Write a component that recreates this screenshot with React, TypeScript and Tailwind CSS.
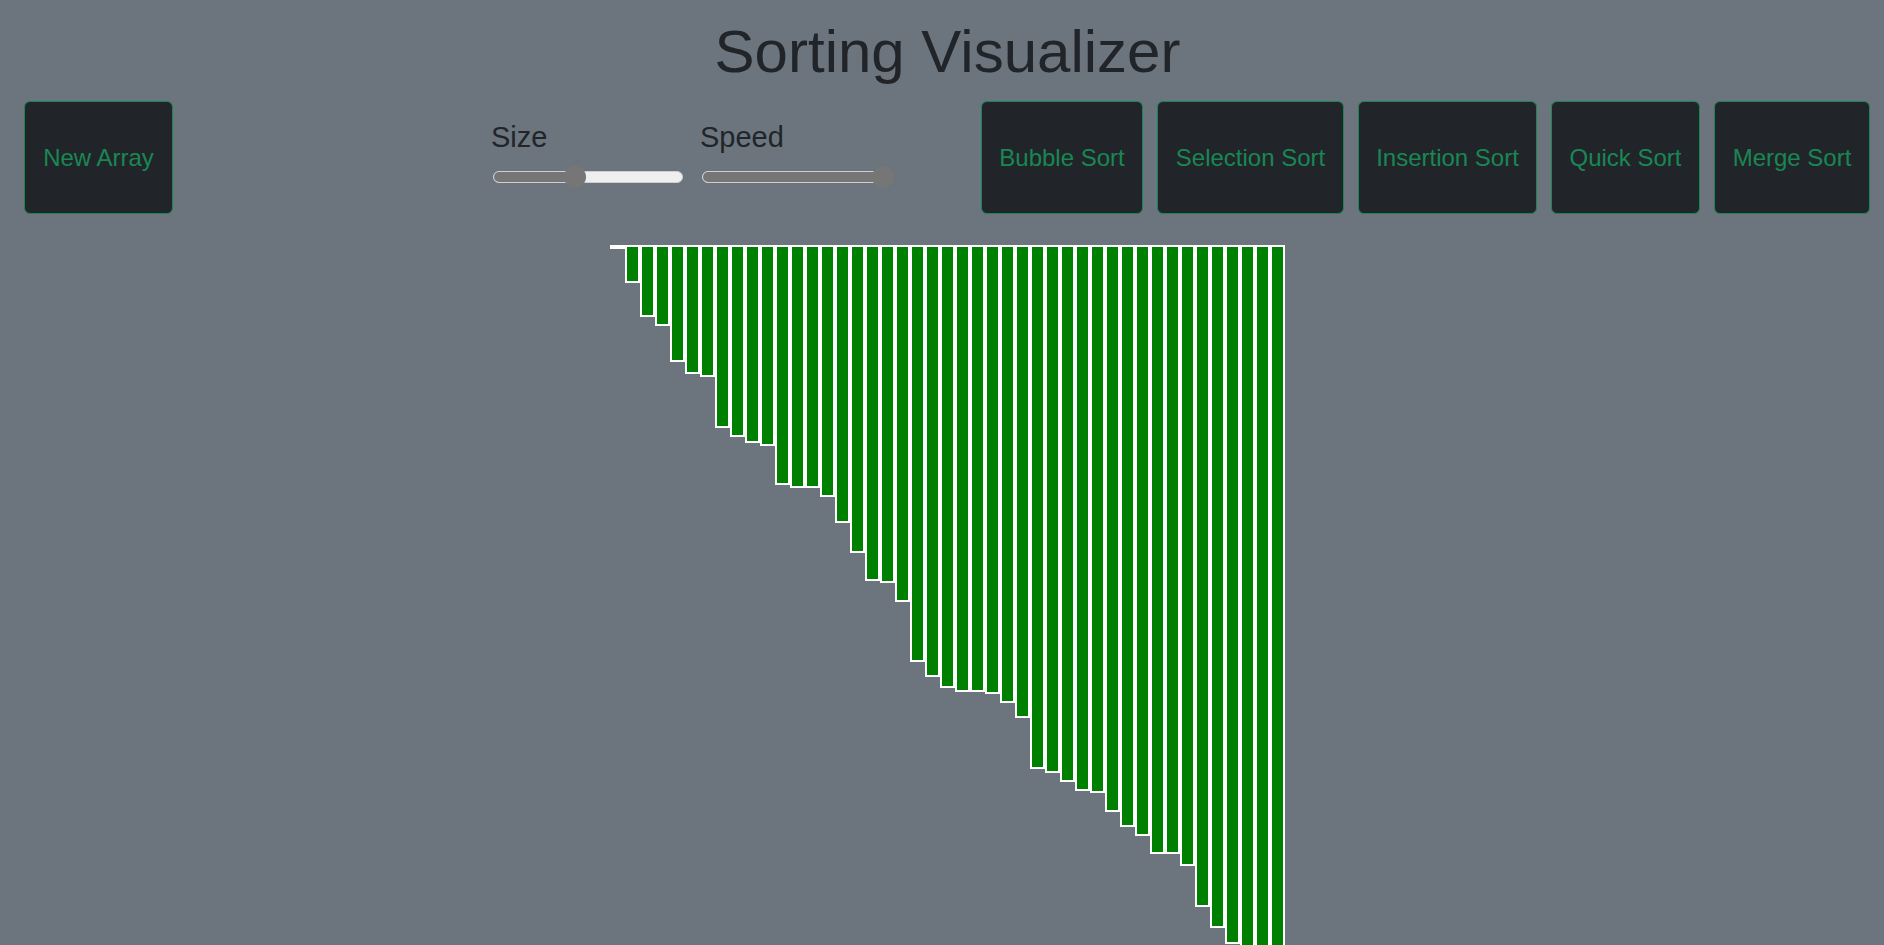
import React from "react";

const heights = [
  0, 34, 68, 77, 113, 125, 128, 179, 188, 194, 197, 236, 239, 239, 248, 274,
  304, 332, 334, 353, 413, 428, 439, 443, 443, 445, 454, 469, 520, 524, 533,
  542, 544, 563, 578, 587, 605, 605, 617, 658, 679, 695, 710, 730, 750,
];

function Btn({ label, w }: { label: string; w: string }) {
  return (
    <button
      className={`${w} h-[113px] flex items-center justify-center border border-[#198754] rounded-[6px] bg-[#212529] text-[#198754] text-[24px] leading-[28px] whitespace-nowrap shrink-0`}
    >
      {label}
    </button>
  );
}

function Slider({ label, thumbLeft, width }: { label: string; thumbLeft: number; width: number }) {
  return (
    <div className="flex flex-col" style={{ width }}>
      <div className="mt-[19px] -ml-[2px] text-[29px] leading-[35px] text-[#212529]">{label}</div>
      <div className="relative mt-[11px] h-[22px] flex items-center">
        <div className="relative w-full h-[12px] rounded-full bg-[#efefef] border border-[#cfcfcf] overflow-hidden">
          <div className="absolute left-0 top-0 h-full bg-[#767676]" style={{ width: thumbLeft + 11 }} />
        </div>
        <div
          className="absolute top-0 w-[22px] h-[22px] rounded-full bg-[#767676]"
          style={{ left: thumbLeft }}
        />
      </div>
    </div>
  );
}

export default function App() {
  return (
    <div className="h-screen w-full overflow-hidden bg-[#6c757d] font-['Liberation_Sans',Arial,sans-serif]">
      <h1 className="pt-[16px] pl-[11px] text-center text-[60px] leading-[72px] text-[#212529] font-normal">
        Sorting Visualizer
      </h1>
      <div className="flex items-start mt-[13px]">
        <div className="ml-[24px]">
          <Btn label="New Array" w="w-[149px]" />
        </div>
        <div className="flex ml-[320px] gap-[19px]">
          <Slider label="Size" thumbLeft={71} width={190} />
          <Slider label="Speed" thumbLeft={170} width={191} />
        </div>
        <div className="flex ml-[88px] gap-[14px]">
          <Btn label="Bubble Sort" w="w-[162px]" />
          <Btn label="Selection Sort" w="w-[187px]" />
          <Btn label="Insertion Sort" w="w-[179px]" />
          <Btn label="Quick Sort" w="w-[149px]" />
          <Btn label="Merge Sort" w="w-[156px]" />
        </div>
      </div>
      <div className="flex items-start ml-[610px] mt-[31px]">
        {heights.map((h, i) => (
          <div
            key={i}
            className="w-[15px] box-border border-2 border-white bg-[#008000] shrink-0"
            style={{ height: h + 4 }}
          />
        ))}
      </div>
    </div>
  );
}
